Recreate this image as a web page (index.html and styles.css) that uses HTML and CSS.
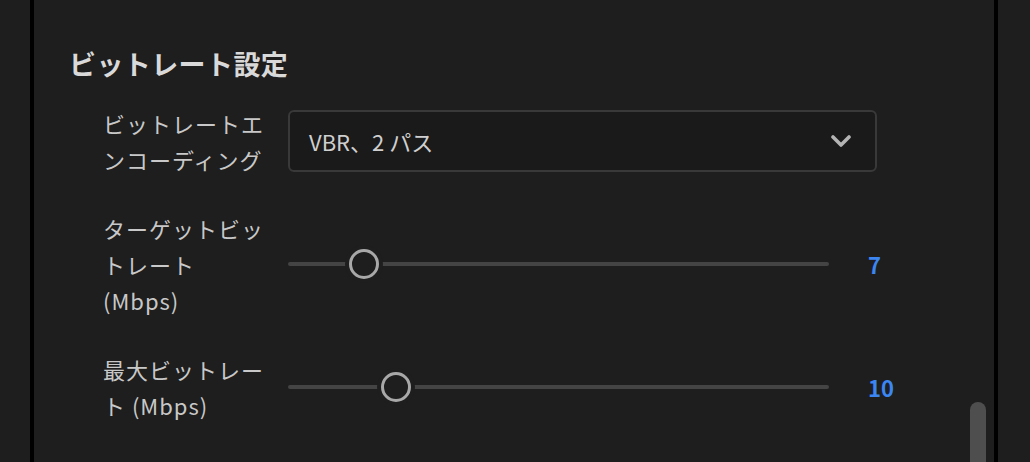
FILE: index.html
```html
<!DOCTYPE html>
<html lang="ja">
<head>
<meta charset="utf-8">
<title>ビットレート設定</title>
<link rel="stylesheet" href="styles.css">
</head>
<body>
<div class="app">
  <div class="side side-left"></div>
  <main class="panel">
    <h2 class="heading">ビットレート設定</h2>
    <div class="rows">
      <div class="row">
        <div class="label">ビットレートエンコーディング</div>
        <div class="select">
          <span class="select-text">VBR、2 パス</span>
          <svg class="chevron" width="20" height="12" viewBox="0 0 20 12"><path d="M2 2 L10 10 L18 2" fill="none" stroke="#b4b4b4" stroke-width="3.6" stroke-linecap="round" stroke-linejoin="round"/></svg>
        </div>
      </div>
      <div class="row">
        <div class="label">ターゲットビットレート (Mbps)</div>
        <div class="slider">
          <div class="track"></div>
          <div class="thumb" style="left: 14%"></div>
        </div>
        <div class="value">7</div>
      </div>
      <div class="row">
        <div class="label">最大ビットレート (Mbps)</div>
        <div class="slider">
          <div class="track"></div>
          <div class="thumb" style="left: 20%"></div>
        </div>
        <div class="value">10</div>
      </div>
    </div>
    <div class="scroll-thumb"></div>
  </main>
  <div class="side side-right"></div>
</div>
</body>
</html>
```

FILE: styles.css
```css
html, body {
  margin: 0;
  padding: 0;
  background: #1e1e1e;
}

body {
  font-family: "Noto Sans CJK JP", "Noto Sans", sans-serif;
  color: #c8c8c8;
  overflow: hidden;
  height: 462px;
}

.app {
  display: flex;
  width: 1030px;
  height: 462px;
  overflow: hidden;
}

.side-left {
  width: 30px;
  flex: none;
}

.side-right {
  width: 32px;
  flex: none;
}

.panel {
  flex: 1;
  position: relative;
  overflow: hidden;
  border-left: 4px solid #000;
  border-right: 4px solid #000;
  padding: 46px 0 0 35px;
  background: #1e1e1e;
}

.heading {
  margin: 0;
  font-size: 27px;
  line-height: 36px;
  font-weight: 700;
  color: #d9d9d9;
  letter-spacing: 0.4px;
}

.rows {
  display: flex;
  flex-direction: column;
  gap: 33px;
  margin-top: 23px;
  padding-left: 34px;
}

.row {
  display: flex;
  align-items: center;
}

.label {
  width: 168px;
  margin-right: 17px;
  flex: none;
  font-size: 22px;
  line-height: 36px;
  letter-spacing: 1px;
  color: #c8c8c8;
}

.select {
  width: 589px;
  height: 62px;
  box-sizing: border-box;
  border: 2px solid #393939;
  border-radius: 6px;
  background: #1a1a1a;
  display: flex;
  align-items: center;
  justify-content: space-between;
  padding: 0 24px 0 19px;
}

.select-text {
  font-size: 22px;
  color: #cfcfcf;
}

.slider {
  position: relative;
  width: 541px;
  height: 32px;
  flex: none;
}

.track {
  position: absolute;
  left: 0;
  right: 0;
  top: 14px;
  height: 4px;
  border-radius: 2px;
  background: #444;
}

.thumb {
  position: absolute;
  top: 1px;
  width: 30px;
  height: 30px;
  box-sizing: border-box;
  margin-left: -15px;
  border-radius: 50%;
  border: 3.5px solid #a8a8a8;
  background: #1e1e1e;
  box-shadow: 0 0 0 4px #1e1e1e;
}

.value {
  margin-left: 39px;
  font-size: 22px;
  font-weight: 700;
  color: #3b86f2;
}

.scroll-thumb {
  position: absolute;
  right: 8px;
  top: 402px;
  width: 16px;
  height: 90px;
  border-radius: 8px;
  background: #4e4e4e;
}
```
